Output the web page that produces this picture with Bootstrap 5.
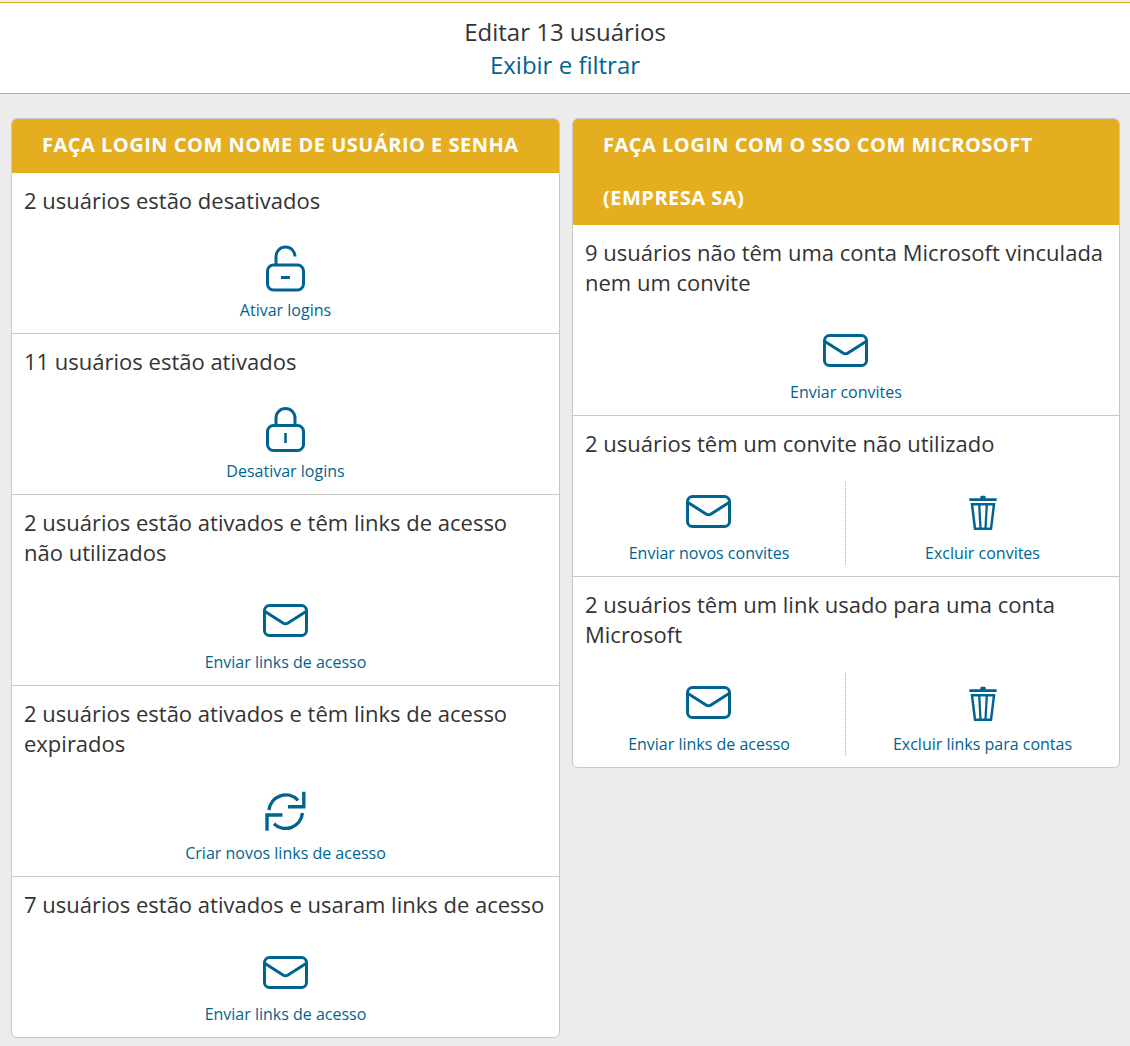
<!DOCTYPE html>
<html lang="pt-BR">
<head>
<meta charset="utf-8">
<title>Editar 13 usuários</title>
<link href="https://cdn.jsdelivr.net/npm/bootstrap@5.3.0/dist/css/bootstrap.min.css" rel="stylesheet">
<style>
html,body{height:1046px;overflow:hidden}
body{background:#ececec;font-family:"Open Sans",sans-serif;color:#333;padding-top:2px}
.topbar{background:#fff;border-top:1px solid #e5ae20;border-bottom:1px solid #e5ae20;height:92px;font-size:24px;line-height:33px;padding-top:12px}
.topbar a{color:#00648f;text-decoration:none;display:block}
.panels{padding:24px 10px 0 11px;gap:12px;align-items:flex-start}
.panel{flex:0 0 549px;border:1px solid #c8c8c8;border-radius:6px;overflow:hidden;background:#fff}
.panel+.panel{flex:0 0 548px}
.phead{background:#e5ae20;color:#fff;font-weight:700;font-size:20px;line-height:53px;letter-spacing:.5px;padding:0 29.5px 1px 30px;margin-top:-1px;min-height:55px;text-transform:uppercase}
.sect{border-top:1px solid #c8c8c8;padding:12px 0 11px}
.phead+.sect{border-top:0}
.sect p{font-size:22px;line-height:30px;margin:0 12px 24px}
.acts{height:83px}
.act{flex:1 1 0;height:83px;color:#00648f;text-decoration:none;font-size:16px;line-height:20px;text-align:center;display:flex;flex-direction:column;align-items:center;padding-top:5px}
.act:not(:only-child){flex:0 0 50%}
.act:not(:last-child){border-right:1px dotted #e5ae20}
.act svg{height:48px;width:50px;margin-bottom:8px;display:block;flex:none}
.act span{display:block}
</style>
</head>
<body>
<svg width="0" height="0" class="position-absolute">
<defs>
<symbol id="i-open" viewBox="0 0 50 48"><g fill="none" stroke="#00648f" stroke-width="3"><path d="M15 20V12.500a9.500 9.500 0 0 1 19 0"/><rect x="6.500" y="21" width="36" height="25" rx="6"/></g><path d="M20 33.500h9" stroke="#00648f" stroke-width="3"/></symbol>
<symbol id="i-lock" viewBox="0 0 50 48"><g fill="none" stroke="#00648f" stroke-width="3"><path d="M15 20V13a9.500 9.500 0 0 1 19 0v7"/><rect x="6.500" y="20.500" width="36" height="25" rx="6"/></g><path d="M24.500 28v10" stroke="#00648f" stroke-width="2.600"/></symbol>
<symbol id="i-mail" viewBox="0 0 50 48"><g fill="none" stroke="#00648f" stroke-width="3"><rect x="3.500" y="9.500" width="42" height="30" rx="5"/><path d="M4 15.500l18 11.500a4.500 4.500 0 0 0 5 0l18-11.500" stroke-linejoin="round"/></g></symbol>
<symbol id="i-sync" viewBox="0 0 50 48"><g fill="none" stroke="#00648f" stroke-width="3.400"><path d="M8 23A16.800 16.800 0 0 1 37 13.300"/><path d="M42.800 4.700V19.700H27"/><path d="M41.400 26A16.800 16.800 0 0 1 13 36.700"/><path d="M6 43.700V28H21.500"/></g></symbol>
<symbol id="i-trash" viewBox="0 0 50 48"><path fill="#00648f" d="M11.300 11.300h11v-1.300a1.300 1.300 0 0 1 1.300-1.300h2.800a1.300 1.300 0 0 1 1.300 1.300v1.300h11v2.700H11.300z"/><path fill="none" stroke="#00648f" stroke-width="2.500" d="M14 17.300h22l-3 24.500H17z"/><path fill="none" stroke="#00648f" stroke-width="2.300" d="M21.200 17.500l1.300 24M28.800 17.500l-1.300 24"/></symbol>
</defs>
</svg>
<header class="topbar text-center">Editar 13 usuários<a href="#">Exibir e filtrar</a></header>
<main class="panels d-flex">
<section class="panel">
<div class="phead">Faça login com nome de usuário e senha</div>
<div class="sect"><p>2 usuários estão desativados</p><div class="acts d-flex"><a class="act" href="#"><svg><use href="#i-open"/></svg><span>Ativar logins</span></a></div></div>
<div class="sect"><p>11 usuários estão ativados</p><div class="acts d-flex"><a class="act" href="#"><svg><use href="#i-lock"/></svg><span>Desativar logins</span></a></div></div>
<div class="sect"><p>2 usuários estão ativados e têm links de acesso não utilizados</p><div class="acts d-flex"><a class="act" href="#"><svg><use href="#i-mail"/></svg><span>Enviar links de acesso</span></a></div></div>
<div class="sect"><p>2 usuários estão ativados e têm links de acesso expirados</p><div class="acts d-flex"><a class="act" href="#"><svg><use href="#i-sync"/></svg><span>Criar novos links de acesso</span></a></div></div>
<div class="sect"><p>7 usuários estão ativados e usaram links de acesso</p><div class="acts d-flex"><a class="act" href="#"><svg><use href="#i-mail"/></svg><span>Enviar links de acesso</span></a></div></div>
</section>
<section class="panel">
<div class="phead">Faça login com o SSO com Microsoft (Empresa SA)</div>
<div class="sect"><p>9 usuários não têm uma conta Microsoft vinculada nem um convite</p><div class="acts d-flex"><a class="act" href="#"><svg><use href="#i-mail"/></svg><span>Enviar convites</span></a></div></div>
<div class="sect"><p>2 usuários têm um convite não utilizado</p><div class="acts d-flex"><a class="act" href="#"><svg><use href="#i-mail"/></svg><span>Enviar novos convites</span></a><a class="act" href="#"><svg><use href="#i-trash"/></svg><span>Excluir convites</span></a></div></div>
<div class="sect"><p>2 usuários têm um link usado para uma conta Microsoft</p><div class="acts d-flex"><a class="act" href="#"><svg><use href="#i-mail"/></svg><span>Enviar links de acesso</span></a><a class="act" href="#"><svg><use href="#i-trash"/></svg><span>Excluir links para contas</span></a></div></div>
</section>
</main>
<script src="https://cdn.jsdelivr.net/npm/bootstrap@5.3.0/dist/js/bootstrap.bundle.min.js"></script>
</body>
</html>
